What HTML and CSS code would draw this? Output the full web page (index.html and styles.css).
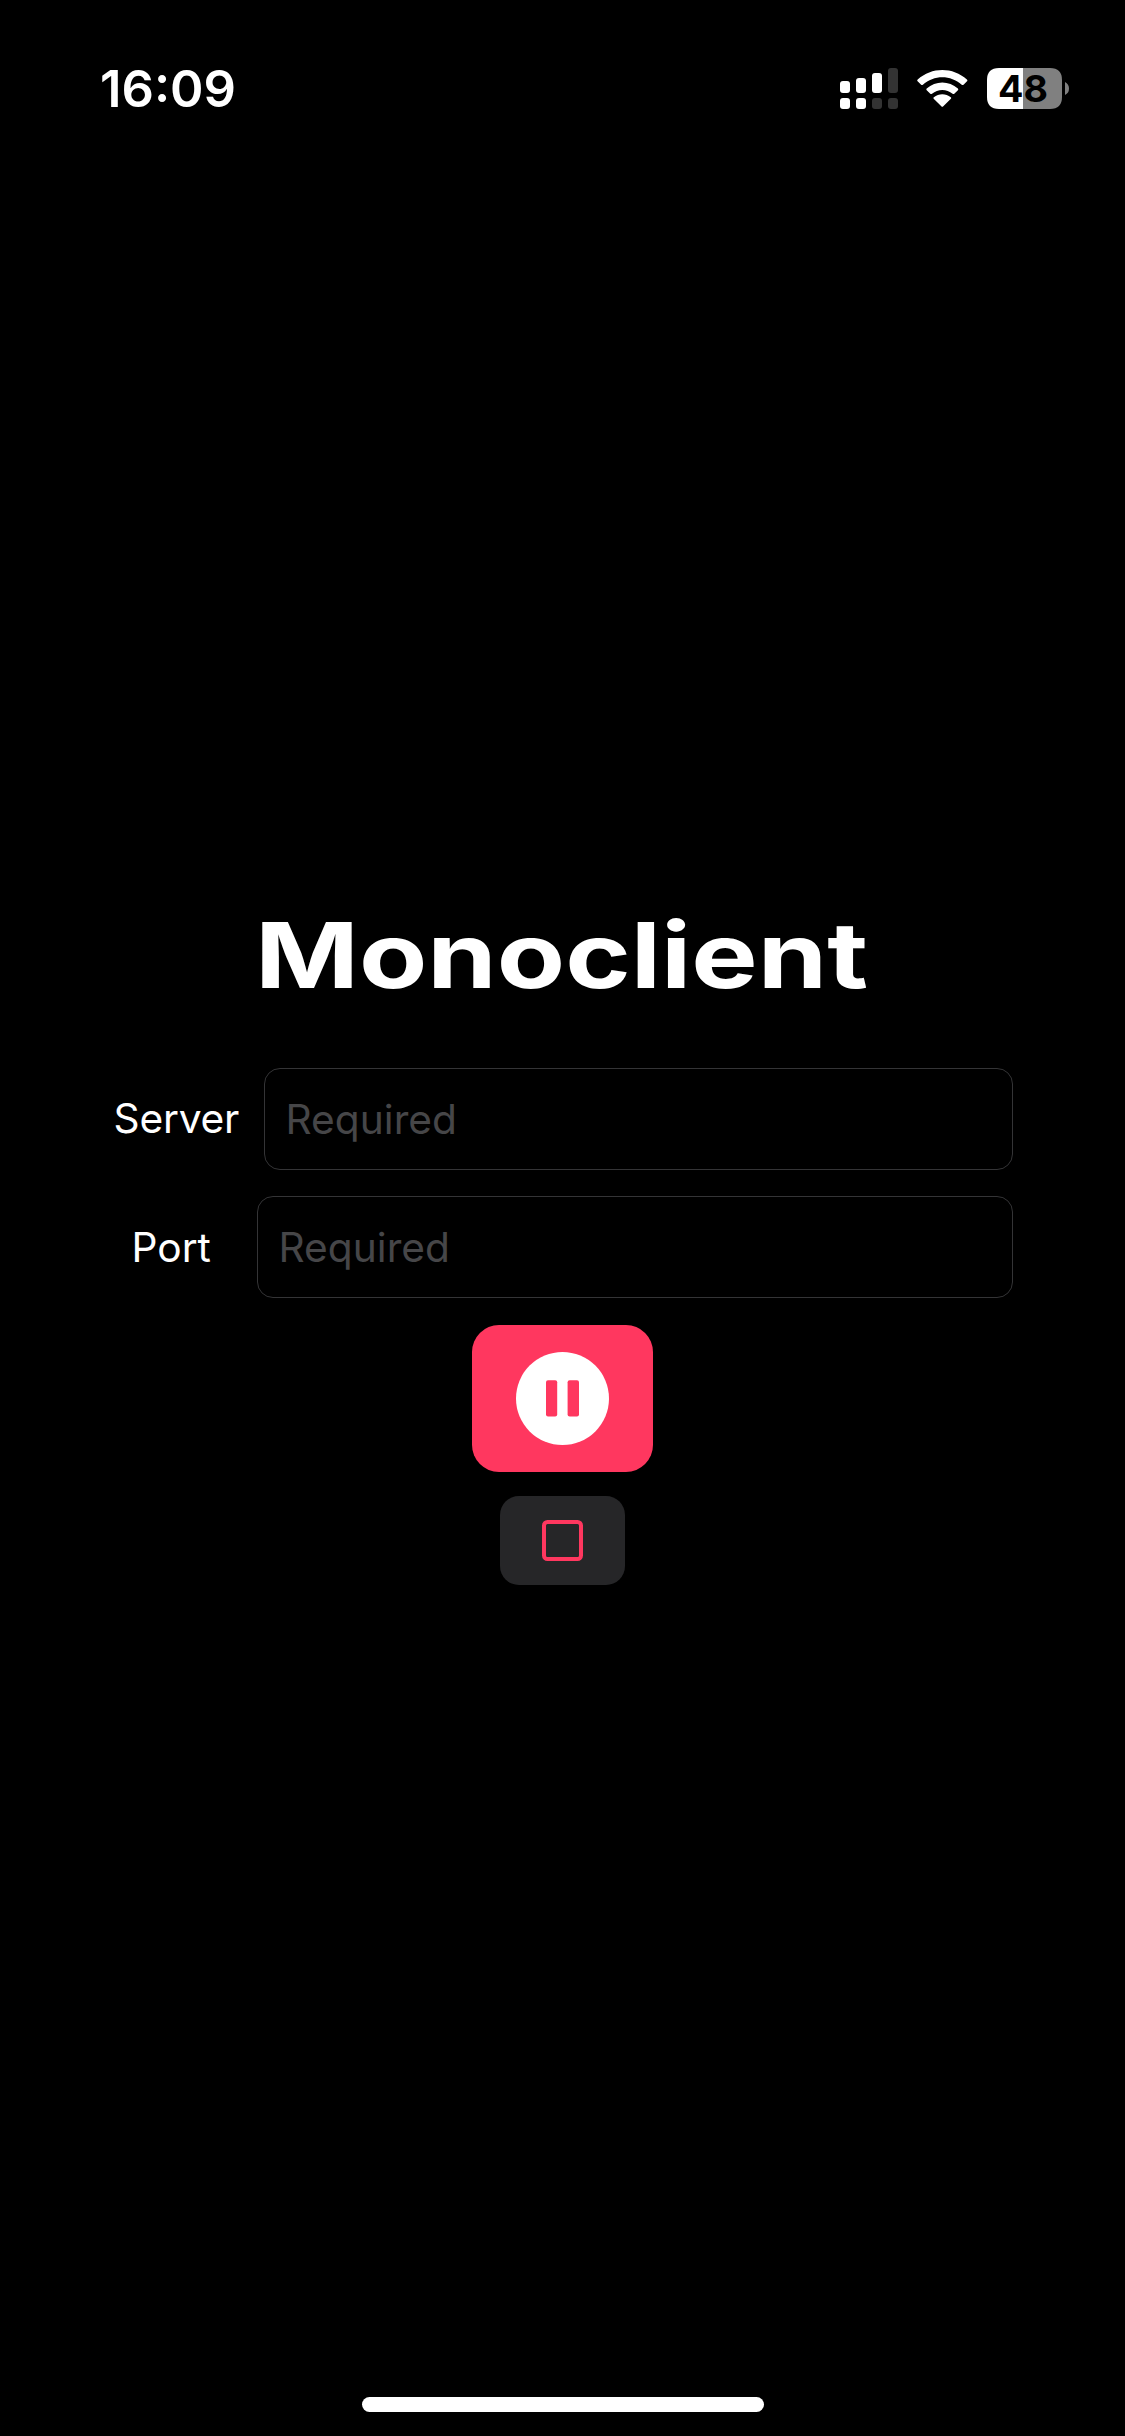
FILE: index.html
```
<!DOCTYPE html>
<html lang="en">
<head>
<meta charset="utf-8">
<title>Monoclient</title>
<link rel="stylesheet" href="styles.css">
</head>
<body>
<div class="screen">
  <header class="status">
    <svg class="time" width="160" height="76" viewBox="0 0 160 76"><text x="2" y="57" textLength="136" lengthAdjust="spacingAndGlyphs">16:09</text></svg>
    <svg class="indicators" width="232" height="44" viewBox="0 0 232 44">
      <g fill="#fff">
        <rect x="2" y="14" width="10" height="12" rx="3"/>
        <rect x="18" y="11" width="10" height="15" rx="3"/>
        <rect x="34" y="6" width="10" height="20" rx="3"/>
        <rect x="2" y="31" width="10" height="11" rx="3"/>
        <rect x="18" y="31" width="10" height="11" rx="3"/>
      </g>
      <g fill="#333">
        <rect x="50" y="1" width="10" height="25" rx="3"/>
        <rect x="34" y="31" width="10" height="11" rx="3"/>
        <rect x="50" y="31" width="10" height="11" rx="3"/>
      </g>
      <g fill="#fff">
        <path d="M79.6 14.2Q78.8 13.4 79.7 12.6C93.5-.2 115.100-.2 128.900 12.6Q129.800 13.400 129 14.200L125.500 17.700Q124.600 18.500 123.700 17.700C112.800 7.700 95.800 7.700 84.900 17.700Q84 18.500 83.100 17.700Z"/>
        <path d="M88.700 23.200Q87.800 22.300 88.700 21.500C97.600 13.400 111 13.400 119.900 21.500Q120.800 22.300 119.900 23.200L116.300 26.700Q115.500 27.500 114.600 26.700C108.700 21.600 99.900 21.600 94 26.700Q93.100 27.500 92.300 26.700Z"/>
        <path d="M95.700 31.800Q94.900 31 95.800 30.200C100.900 26.100 107.700 26.100 112.800 30.200Q113.700 31 112.900 31.800L105.300 39.300Q104.300 40.300 103.300 39.300Z"/>
      </g>
      <path fill="#fff" d="M185 1H161Q149 1 149 13V30Q149 42 161 42H185Z"/>
      <path fill="#808080" d="M185 1H212Q224 1 224 13V30Q224 42 212 42H185ZM227 15Q231 17 231 21.500T227 28Z"/>
      <text class="battery-level" x="160" y="35" textLength="50" lengthAdjust="spacingAndGlyphs">48</text>
    </svg>
  </header>
  <main class="connect">
    <svg class="title" width="620" height="90" viewBox="0 0 620 90"><text x="2" y="78" textLength="613" lengthAdjust="spacingAndGlyphs">Monoclient</text></svg>
    <div class="row">
      <span class="label label-server">Server</span>
      <div class="field">Required</div>
    </div>
    <div class="row">
      <span class="label label-port">Port</span>
      <div class="field">Required</div>
    </div>
    <div class="button pause">
      <svg width="93" height="93" viewBox="0 0 93 93"><circle cx="46.500" cy="46.500" r="46.500" fill="#fff"/><g fill="#ff375f"><rect x="30" y="28.200" width="11.200" height="36.200" rx="2"/><rect x="51.600" y="28.200" width="11.400" height="36.200" rx="2"/></g></svg>
    </div>
    <div class="button stop">
      <svg width="41" height="41" viewBox="0 0 41 41"><rect x="2" y="2" width="37" height="37" rx="3.500" fill="none" stroke="#ff375f" stroke-width="4"/></svg>
    </div>
  </main>
  <footer class="home"><div class="home-bar"></div></footer>
</div>
</body>
</html>
```
FILE: styles.css
```
body {
  margin: 0;
  background: #000;
  color: #fff;
  font-family: Inter, "Liberation Sans", sans-serif;
}
svg { display: block; }
.screen {
  box-sizing: border-box;
  width: 1125px;
  height: 2436px;
  display: flex;
  flex-direction: column;
  background: #000;
}
.status {
  display: flex;
  justify-content: space-between;
  align-items: flex-start;
  height: 910px;
  padding: 0 55px 0 98px;
  box-sizing: border-box;
}
.time { margin-top: 50px; fill: #fff; font-size: 51px; font-weight: 600; }
.indicators { margin-top: 67px; }
.battery-level { font-size: 37.5px; font-weight: 700; fill: #000; }
.connect { display: flex; flex-direction: column; align-items: center; }
.title { margin-bottom: 68px; fill: #fff; font-size: 91px; font-weight: 700; overflow: visible; }
.row {
  display: flex;
  align-items: center;
  width: 900px;
  height: 102px;
  margin-bottom: 26px;
}
.label {
  box-sizing: border-box;
  font-size: 40.7px;
  line-height: 48px;
  white-space: nowrap;
}
.label-server { width: 151px; padding-left: 1px; letter-spacing: -0.2px; }
.label-port { width: 144px; padding: 1px 0 0 19px; }
.field {
  flex: 1;
  box-sizing: border-box;
  height: 102px;
  padding-left: 21px;
  border: 1px solid #343436;
  border-radius: 16px;
  color: #464648;
  font-size: 40.7px;
  line-height: 102px;
}
.button { display: flex; align-items: center; justify-content: center; }
.pause {
  width: 181px;
  height: 147px;
  margin: 1px 0 24px;
  border-radius: 27px;
  background: #ff375f;
}
.stop { width: 125px; height: 89px; border-radius: 19px; background: #262628; }
.home { display: flex; justify-content: center; margin-top: auto; padding-bottom: 24px; }
.home-bar { width: 402px; height: 15px; border-radius: 8px; background: #fff; }
```
